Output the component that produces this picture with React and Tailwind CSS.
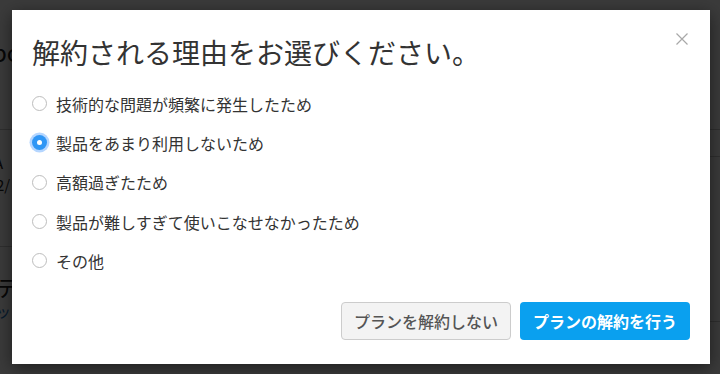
import { useState } from 'react';

const reasons = [
  '技術的な問題が頻繁に発生したため',
  '製品をあまり利用しないため',
  '高額過ぎたため',
  '製品が難しすぎて使いこなせなかったため',
  'その他',
];

function Radio({ checked }) {
  if (checked) {
    return (
      <span className="flex h-[15px] w-[15px] shrink-0 items-center justify-center rounded-full bg-[#2f96f5] shadow-[0_0_0_2.5px_rgba(90,165,255,0.45)]">
        <span className="h-[5px] w-[5px] rounded-full bg-white" />
      </span>
    );
  }
  return <span className="h-[15px] w-[15px] shrink-0 rounded-full border border-[#bdbdbd] bg-white" />;
}

export default function App() {
  const [selected, setSelected] = useState(1);

  return (
    <div
      className="relative h-[374px] w-[720px] overflow-hidden bg-white"
      style={{ fontFamily: '"Noto Sans CJK JP", "Noto Sans", sans-serif' }}
    >
      {/* page behind the overlay */}
      <div className="text-[#222]">
        <div className="pl-0 pt-[38px] text-[24px] leading-[28px] -ml-[8px]">bo</div>
        <div className="mt-[63px] border-t border-[#ccc]" />
        <div className="pt-[22px] text-[15px] leading-[22px] -ml-[6px]">A</div>
        <div className="text-[15px] leading-[22px] -ml-[4px]">2/</div>
        <div className="mt-[50px] w-[14px] border-t border-[#ccc]" />
        <div className="pt-[26px] text-[22px] leading-[26px] -ml-[4px]">デ</div>
        <div className="mt-[2px] text-[15px] leading-[20px] -ml-[4px] text-[#1a70c0]">ッ</div>
      </div>
      <div className="absolute right-0 top-[156px] w-[14px] border-t border-[#ccc]" />
      <div className="absolute right-0 top-[321px] w-[14px] border-t border-[#ccc]" />

      {/* overlay + modal */}
      <div className="absolute inset-0 bg-[rgba(0,0,0,0.77)] pl-[12px] pt-[10px]">
        <div className="relative flex h-[354px] w-[698px] flex-col bg-white px-[20px] pb-[24px] pt-[22px] shadow-[0_4px_16px_rgba(0,0,0,0.5)]">
          <button className="absolute right-[21px] top-[22px] h-[14px] w-[14px]" aria-label="close">
            <svg viewBox="0 0 14 14" className="h-[14px] w-[14px]">
              <path d="M1.5 1.5 L12.5 12.5 M12.5 1.5 L1.5 12.5" stroke="#a8a8a8" strokeWidth="1.2" fill="none" />
            </svg>
          </button>

          <h2 className="text-[28px] font-normal leading-[40px] text-[#333]">解約される理由をお選びください。</h2>

          <ul className="mt-[12px] flex flex-col">
            {reasons.map((r, i) => (
              <li
                key={r}
                onClick={() => setSelected(i)}
                className="flex h-[39.3px] cursor-pointer items-center gap-[9px] text-[16px] text-[#333]"
              >
                <Radio checked={selected === i} />
                <span>{r}</span>
              </li>
            ))}
          </ul>

          <div className="mt-auto flex justify-end gap-[9px]">
            <button className="h-[38px] w-[170px] rounded-[4px] border border-[#cccccc] bg-[#f3f3f3] text-[16px] font-medium text-[#555]">
              プランを解約しない
            </button>
            <button className="h-[38px] w-[170px] rounded-[4px] bg-[#0aa0ef] text-[16px] font-bold text-white">
              プランの解約を行う
            </button>
          </div>
        </div>
      </div>
    </div>
  );
}
